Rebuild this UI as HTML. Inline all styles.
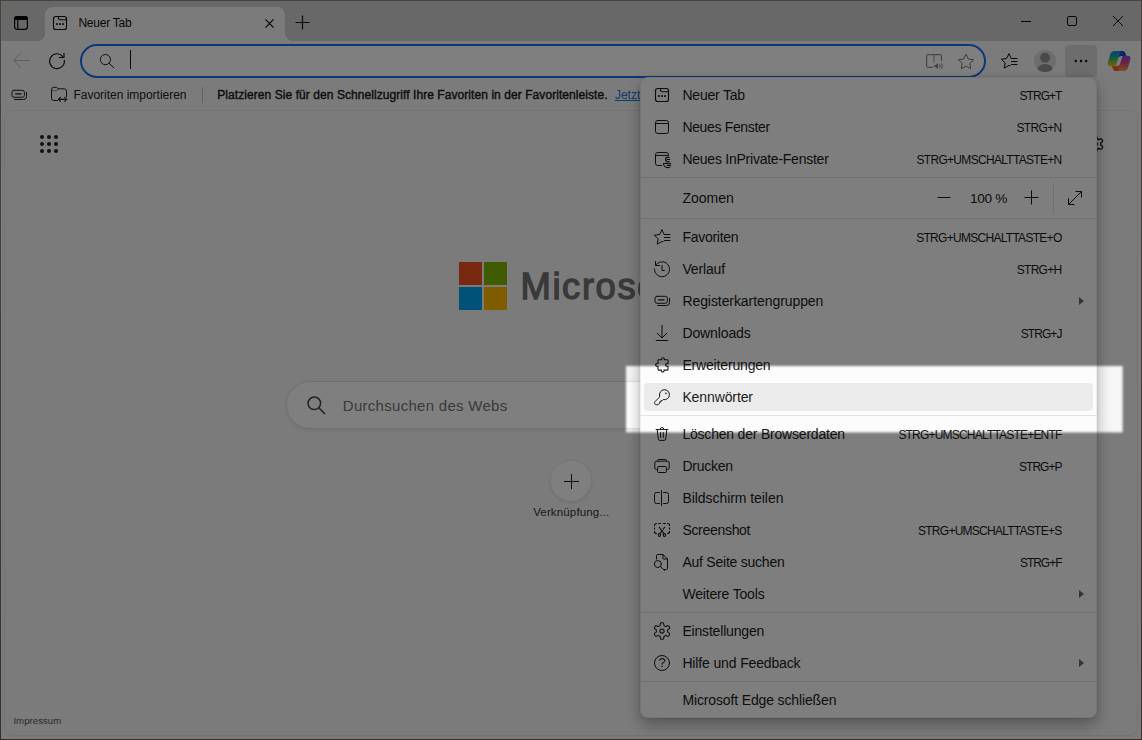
<!DOCTYPE html>
<html lang="de"><head><meta charset="utf-8"><title>Neuer Tab</title>
<style>
*{box-sizing:border-box;margin:0;padding:0}
html,body{width:1142px;height:740px;overflow:hidden;background:linear-gradient(#968478,#8c7868 60%,#735f4e)}
body{font-family:"Liberation Sans",sans-serif;color:#1b1b1b;position:relative}
#win{position:absolute;left:1px;top:1px;width:1140px;height:738px;background:#d0d0d0;overflow:hidden}
.abs{position:absolute}
svg{display:block}
/* tab strip */
#tab{position:absolute;left:44px;top:6px;width:240px;height:34px;background:#f7f7f7;border-radius:8px 8px 0 0}
#tab:before,#tab:after{content:"";position:absolute;bottom:0;width:8px;height:8px}
#tab:before{left:-8px;background:radial-gradient(circle at 0 0,rgba(247,247,247,0) 7.6px,#f7f7f7 8.4px)}
#tab:after{right:-8px;background:radial-gradient(circle at 100% 0,rgba(247,247,247,0) 7.6px,#f7f7f7 8.4px)}
#tabtitle{position:absolute;left:77.4px;top:15px;font-size:12px;line-height:14px;white-space:nowrap;color:#111}
/* toolbar */
#toolbar{position:absolute;left:0;top:40px;width:1140px;height:698px;background:#f7f7f7}
#addr{position:absolute;left:79px;top:43px;width:906px;height:34px;border:2px solid #1870f0;border-radius:17px;background:#fff}
#caret{position:absolute;left:129px;top:49px;width:1px;height:19px;background:#111}
#more{position:absolute;left:1064px;top:44px;width:32px;height:32px;border-radius:4px;background:#dadada}
.dot{position:absolute;width:2.400px;height:2.400px;border-radius:1.200px;background:#111;top:58.800px}
#favtxt{position:absolute;left:72.500px;top:87px;font-size:12px;line-height:14px;white-space:nowrap;color:#222}
#favsep{position:absolute;left:201px;top:86px;width:1px;height:16px;background:#c4c4c4}
#prompt{position:absolute;left:216.300px;top:87px;font-size:12px;line-height:14px;white-space:nowrap;color:#1b1b1b;-webkit-text-stroke:.4px #1b1b1b}
#jetzt{position:absolute;left:613.900px;top:87px;font-size:12px;line-height:14px;white-space:nowrap;color:#1478e0;text-decoration:underline}
/* content */
#content{position:absolute;left:3px;top:109px;width:1134px;height:626px;background:#f7f7f7;border:1px solid #e6e6e6;border-radius:8px;overflow:hidden}
.gd{position:absolute;width:4px;height:4px;border-radius:2px;background:#222}
.sq{position:absolute;width:23px;height:23px}
#ms{position:absolute;left:519.500px;top:262px;font-size:36.400px;line-height:48px;font-weight:normal;color:#737373;-webkit-text-stroke:1.300px #737373;white-space:nowrap;letter-spacing:1.600px}
#search{position:absolute;left:285px;top:380px;width:701px;height:48px;border-radius:24px;background:#fff;border:1px solid #e3e3e3;box-shadow:0 1px 4px rgba(0,0,0,.08)}
#sph{position:absolute;left:341.800px;top:395.600px;font-size:15px;line-height:18px;color:#747474;white-space:nowrap}
#plus{position:absolute;left:550px;top:460px;width:40px;height:40px;border-radius:20px;background:#fff;box-shadow:0 1px 4px rgba(0,0,0,.14)}
#verk{position:absolute;left:520.300px;width:100px;text-align:center;top:503.600px;font-size:11.500px;line-height:14px;color:#333;white-space:nowrap}
#impr{position:absolute;left:12.400px;top:713.800px;font-size:9.600px;line-height:12px;color:#555;white-space:nowrap}
/* menu */
#menu{position:absolute;left:639px;top:76px;width:457px;height:641px;background:#fcfcfc;border-radius:8px;box-shadow:0 0 0 1px rgba(0,0,0,.06) inset,0 7px 15px rgba(0,0,0,.30),0 0 4px rgba(0,0,0,.10);padding:2px 0 0 0;font-size:14px}
.item{position:relative;height:32px}
.zoomrow{position:relative;height:36px}
.sep{height:1px;margin:2px 0 2px 0;background:#e3e3e3}
.ic{position:absolute;left:12px;top:6px;width:20px;height:20px;color:#1b1b1b}
.lbl{position:absolute;left:42.400px;top:6.700px;line-height:18px;font-size:14px;white-space:nowrap;color:#1b1b1b}
.zoomrow .lbl{top:8.700px}
.sc{position:absolute;right:35.500px;top:8.500px;line-height:16px;font-size:12px;white-space:nowrap;color:#1b1b1b}
.arr{position:absolute;left:439px;top:12px;width:0;height:0;border-left:5px solid #6a6a6a;border-top:4px solid transparent;border-bottom:4px solid transparent}
.hov{position:absolute;left:4px;right:4px;top:2px;bottom:2px;border-radius:4px;background:#ebebeb}
.zoomrow svg{position:absolute;fill:none;stroke:#1b1b1b;stroke-width:1}
.zm{left:296px;top:9px;width:16px;height:16px}
.zp{left:383px;top:9px;width:16px;height:16px}
.zf{left:427px;top:10px;width:16px;height:16px}
.zpct{position:absolute;left:330px;top:9.500px;font-size:13.600px;line-height:18px;white-space:nowrap}
.zsep{position:absolute;left:413px;top:2px;width:1px;height:32px;background:#e3e3e3}
#overlay{position:absolute;left:0;top:0;width:1142px;height:740px;pointer-events:none}
#l1{letter-spacing:-0.205px}
#s1{letter-spacing:-0.945px}
#l2{letter-spacing:-0.341px}
#s2{letter-spacing:-0.669px}
#l3{letter-spacing:-0.241px}
#s3{letter-spacing:-0.696px}
#t_zoomen{letter-spacing:-0.010px}
#t_pct{letter-spacing:-0.329px}
#l4{letter-spacing:-0.262px}
#s4{letter-spacing:-0.715px}
#l5{letter-spacing:-0.156px}
#s5{letter-spacing:-0.703px}
#l6{letter-spacing:-0.072px}
#l7{letter-spacing:-0.107px}
#s7{letter-spacing:-0.941px}
#l8{letter-spacing:-0.168px}
#l9{letter-spacing:-0.109px}
#l10{letter-spacing:-0.201px}
#s10{letter-spacing:-0.803px}
#l11{letter-spacing:-0.234px}
#s11{letter-spacing:-0.977px}
#l12{letter-spacing:-0.055px}
#l13{letter-spacing:-0.303px}
#s13{letter-spacing:-0.738px}
#l14{letter-spacing:-0.235px}
#s14{letter-spacing:-1.012px}
#l15{letter-spacing:-0.170px}
#l16{letter-spacing:-0.182px}
#l17{letter-spacing:-0.141px}
#l18{letter-spacing:-0.137px}
#tabtitle{letter-spacing:-0.228px}
#favtxt{letter-spacing:-0.019px}
#prompt{letter-spacing:0.066px}
#sph{letter-spacing:0.286px}
#impr{letter-spacing:0.050px}
#verk{letter-spacing:0.152px}
</style></head>
<body>
<div id="win">
  <!-- tab strip -->
  <svg class="abs" style="left:12px;top:14px" width="16" height="16" viewBox="0 0 16 16" fill="none" stroke="#000" stroke-width="1.200"><rect x="1.600" y="1.600" width="12.800" height="12.800" rx="2.600"/><path d="M1.600 4.500h12.800V3.800a2.200 2.200 0 0 0-2.200-2.200H3.800a2.200 2.200 0 0 0-2.200 2.200z" fill="#000"/><path d="M4.800 4.500v10"/></svg>
  <div id="tab"></div>
  <span class="abs" style="left:49px;top:12px;color:#111"><svg viewBox="0 0 20 20" width="20" height="20" fill="none" stroke="currentColor" stroke-width="1" stroke-linecap="round" stroke-linejoin="round" ><rect x="3.500" y="3.500" width="13" height="13" rx="2.300" stroke-width="1.150"/><path d="M8.500 3.500v1.500a1.700 1.700 0 0 0 1.700 1.700h6.300" stroke-width="1.150"/><g fill="currentColor" stroke="none"><rect x="6.100" y="10.200" width="1.800" height="1.700"/><rect x="9.100" y="10.200" width="1.800" height="1.700"/><rect x="12.100" y="10.200" width="1.800" height="1.700"/></g></svg></span>
  <span id="tabtitle">Neuer Tab</span>
  <svg class="abs" style="left:263px;top:17px" width="11" height="11" viewBox="0 0 11 11" stroke="#111" stroke-width="1.200" fill="none"><path d="M1.500 1.300l8 8.400M9.500 1.300l-8 8.400"/></svg>
  <svg class="abs" style="left:293px;top:13px" width="17" height="17" viewBox="0 0 17 17" stroke="#111" stroke-width="1.200" fill="none"><path d="M1.500 8.500h14M8.500 1.500v14"/></svg>
  <svg class="abs" style="left:1019px;top:14px" width="12" height="12" viewBox="0 0 12 12" stroke="#111" stroke-width="1" fill="none"><path d="M1 6.500h10"/></svg>
  <svg class="abs" style="left:1065px;top:14px" width="12" height="12" viewBox="0 0 12 12" stroke="#111" stroke-width="1" fill="none"><rect x="1.500" y="1.500" width="9" height="9" rx="1.500"/></svg>
  <svg class="abs" style="left:1111px;top:14px" width="12" height="12" viewBox="0 0 12 12" stroke="#111" stroke-width="1" fill="none"><path d="M1 1l10 10M11 1L1 11"/></svg>

  <!-- toolbar -->
  <div id="toolbar"></div>
  <svg class="abs" style="left:10px;top:50px" width="20" height="20" viewBox="0 0 20 20" fill="none" stroke="#bcbcbc" stroke-width="1"><path d="M2.300 9.500h16M9.800 2.500L2.500 9.500l7.300 7"/></svg>
  <svg class="abs" style="left:46px;top:50px" width="20" height="20" viewBox="0 0 20 20" fill="none" stroke="#111" stroke-width="1.100" stroke-linecap="round" stroke-linejoin="round"><path d="M17.400 9.400A7.400 7.400 0 1 1 15.600 5.300"/><path d="M17 2.300V6.500H12.400"/></svg>
  <div id="addr"></div>
  <svg class="abs" style="left:96px;top:50px" width="20" height="20" viewBox="0 0 20 20" fill="none" stroke="#222" stroke-width="1"><circle cx="8.400" cy="8.600" r="5.100"/><path d="M12.200 12.400l4.600 4.400" stroke-linecap="round"/></svg>
  <div id="caret"></div>
  <!-- read aloud -->
  <svg class="abs" style="left:923px;top:50px" width="22" height="20" viewBox="0 0 22 20" fill="none" stroke="#767676" stroke-width="1"><path d="M8.800 16.300H3.700a1 1 0 0 1-1-1V4.700a1 1 0 0 1 1-1h12.700a1 1 0 0 1 1 1v5.100"/><path d="M9.900 3.700v8" stroke-opacity=".75"/><path d="M13.700 12.600l-1.900 1.800h-1.400v1.400h1.400l1.900 1.800z" fill="#767676" stroke-width=".5" stroke-linejoin="round"/><path d="M15.400 13.400a2.600 2.600 0 0 1 0 3.400M17.400 12.300a4.600 4.600 0 0 1 0 5.500" stroke-width=".9"/></svg>
  <!-- star -->
  <svg class="abs" style="left:955px;top:50px" width="20" height="20" viewBox="0 0 20 20" fill="none" stroke="#767676" stroke-width="1" stroke-linejoin="miter" stroke-miterlimit="2.500"><path d="M10 3.200l2.350 4.800l5.300.75l-3.850 3.700l.9 5.250L10 15.200l-4.700 2.500l.9-5.250L2.350 8.750l5.300-.75z"/></svg>
  <span class="abs" style="left:998px;top:50px;color:#111"><svg viewBox="0 0 20 20" width="20" height="20" fill="none" stroke="currentColor" stroke-width="1" stroke-linecap="round" stroke-linejoin="round" ><path d="M12.100 7.400L9.950 2.600L7.600 7.500L2.300 8.200L6.200 11.900L5.200 17.100L9.900 14.500L11.100 14.600" stroke-linejoin="miter" stroke-miterlimit="2"/><path d="M12.500 7.500h5.500M12.500 10.500h5.500M12.500 13.500h5.500"/></svg></span>
  <!-- profile -->
  <svg class="abs" style="left:1033px;top:49px" width="22" height="22" viewBox="0 0 22 22"><defs><clipPath id="pc"><circle cx="11" cy="11" r="11"/></clipPath></defs><circle cx="11" cy="11" r="11" fill="#dedbd8"/><g clip-path="url(#pc)" fill="#939393"><circle cx="11" cy="7.800" r="5"/><ellipse cx="11" cy="21" rx="8.200" ry="7"/></g></svg>
  <div id="more"></div>
  <svg class="abs" style="left:1064px;top:44px" width="32" height="32" viewBox="0 0 32 32" fill="#111"><circle cx="10.800" cy="16" r="1.200"/><circle cx="16" cy="16" r="1.200"/><circle cx="21.200" cy="16" r="1.200"/></svg>
  <!-- copilot -->
  <svg class="abs" style="left:1106px;top:49px" width="24" height="22" viewBox="0 0 24 22">
    <defs>
      <linearGradient id="cg1" x1="0" y1="0" x2="0" y2="1"><stop offset="0" stop-color="#0c8fd8"/><stop offset=".35" stop-color="#16a9b4"/><stop offset=".62" stop-color="#5fbf4a"/><stop offset="1" stop-color="#f4c400"/></linearGradient>
      <linearGradient id="cg2" x1="0" y1="0" x2="0" y2="1"><stop offset="0" stop-color="#f7a13a"/><stop offset=".5" stop-color="#dc4a86"/><stop offset="1" stop-color="#8d42e6"/></linearGradient>
      <linearGradient id="cg3" x1="0" y1="0" x2="1" y2="1"><stop offset="0" stop-color="#0b62d6"/><stop offset="1" stop-color="#0a3fb0"/></linearGradient>
      <linearGradient id="cg4" x1="0" y1="0" x2="1" y2="1"><stop offset="0" stop-color="#e8552a"/><stop offset="1" stop-color="#f07a30"/></linearGradient>
    </defs>
    <path id="cpA" d="M7.500 1H15c2 0 3 1.200 3.500 3l.5 2h-5c-1.700 0-2.500 1-3 2.500l-2 6.500c-.2.700-.6 1.200-1.400 1.200H3.300c-2 0-3-1.700-2.500-3.400L3.200 4.500C3.800 2.400 5.200 1 7.500 1z" fill="url(#cg1)"/>
    <path d="M13 1h2c2 0 3 1.200 3.500 3l.5 2h-5c-1 0-1.700.4-2.200 1z" fill="url(#cg3)"/>
    <g transform="rotate(180 12.100 11)">
      <path d="M7.500 1H15c2 0 3 1.200 3.500 3l.5 2h-5c-1.700 0-2.500 1-3 2.500l-2 6.500c-.2.700-.6 1.200-1.400 1.200H3.300c-2 0-3-1.700-2.500-3.400L3.200 4.500C3.800 2.400 5.200 1 7.500 1z" fill="url(#cg2)"/>
      <path d="M13 1h2c2 0 3 1.200 3.500 3l.5 2h-5c-1 0-1.700.4-2.200 1z" fill="url(#cg4)"/>
    </g>
  </svg>

  <!-- favorites bar -->
  <span class="abs" style="left:8px;top:84px;color:#222"><svg viewBox="0 0 20 20" width="20" height="20" fill="none" stroke="currentColor" stroke-width="1" stroke-linecap="round" stroke-linejoin="round" ><rect x="3" y="5.300" width="12.400" height="7" rx="2"/><path d="M17.500 7.300v4.200a3 3 0 0 1-3 3H5.500"/><path d="M6.500 8.800h5.600" stroke-width="1.300"/></svg></span>
  <svg class="abs" style="left:48px;top:84px" width="20" height="20" viewBox="0 0 20 20" fill="none" stroke="#222" stroke-width="1" stroke-linecap="round" stroke-linejoin="round"><path d="M8.400 15.500H4.700a2.200 2.200 0 0 1-2.200-2.200V4.600a2.200 2.200 0 0 1 2.200-2.200h2.200c.6 0 1 .2 1.400.6l.9.800h6.100a2.200 2.200 0 0 1 2.200 2.200V11.800"/><path d="M2.500 5.700h4.400c.6 0 1-.2 1.400-.6l1-1.200" stroke-opacity=".55"/><path d="M9.500 14.400h8.200M11.400 12.400L9.400 14.400l2 2M15.700 12.400l2 2l-2 2" stroke-width="1.100"/></svg>
  <span id="favtxt">Favoriten importieren</span>
  <div id="favsep"></div>
  <span id="prompt">Platzieren Sie für den Schnellzugriff Ihre Favoriten in der Favoritenleiste.</span>
  <span id="jetzt">Jetzt Favoriten importieren</span>

  <!-- content -->
  <div id="content"></div>
  <div class="gd" style="left:38.7px;top:134.0px"></div><div class="gd" style="left:38.7px;top:141.1px"></div><div class="gd" style="left:38.7px;top:148.2px"></div><div class="gd" style="left:45.8px;top:134.0px"></div><div class="gd" style="left:45.8px;top:141.1px"></div><div class="gd" style="left:45.8px;top:148.2px"></div><div class="gd" style="left:52.9px;top:134.0px"></div><div class="gd" style="left:52.9px;top:141.1px"></div><div class="gd" style="left:52.9px;top:148.2px"></div>
  <div class="sq" style="left:458px;top:261px;background:#f25022"></div>
  <div class="sq" style="left:483px;top:261px;background:#7fba00"></div>
  <div class="sq" style="left:458px;top:286px;background:#00a4ef"></div>
  <div class="sq" style="left:483px;top:286px;background:#ffb900"></div>
  <span id="ms">Microsoft</span>
  <div id="search"></div>
  <svg class="abs" style="left:304px;top:392.500px" width="22" height="22" viewBox="0 0 22 22" fill="none" stroke="#444" stroke-width="1.500" stroke-linecap="round"><circle cx="9.300" cy="9.300" r="6.300"/><path d="M14 14l5.500 5.500"/></svg>
  <span id="sph">Durchsuchen des Webs</span>
  <div id="plus"></div>
  <svg class="abs" style="left:562px;top:472px" width="17" height="17" viewBox="0 0 17 17" stroke="#1b1b1b" stroke-width="1" fill="none"><path d="M1 8.500h15M8.500 1v15"/></svg>
  <span id="verk">Verknüpfung...</span>
  <span id="impr">Impressum</span>
  <span class="abs" style="left:1084px;top:133px;color:#111"><svg viewBox="0 0 20 20" width="20" height="20" fill="none" stroke="currentColor" stroke-width="1.300"><path d="M15.60 10.00 L15.60 10.24 L15.60 10.49 L15.64 10.74 L15.75 11.01 L16.09 11.35 L16.71 11.80 L17.31 12.30 L17.57 12.76 L17.59 13.14 L17.50 13.50 L17.36 13.83 L17.19 14.15 L17.00 14.46 L16.78 14.75 L16.52 15.00 L16.17 15.18 L15.65 15.18 L14.91 14.91 L14.21 14.60 L13.76 14.48 L13.46 14.51 L13.23 14.61 L13.01 14.73 L12.80 14.85 L12.59 14.97 L12.38 15.10 L12.18 15.25 L12.00 15.49 L11.88 15.95 L11.80 16.71 L11.66 17.48 L11.40 17.94 L11.07 18.15 L10.72 18.24 L10.36 18.29 L10.00 18.30 L9.64 18.29 L9.28 18.24 L8.93 18.15 L8.60 17.94 L8.34 17.48 L8.20 16.71 L8.12 15.95 L8.00 15.49 L7.82 15.25 L7.62 15.10 L7.41 14.97 L7.20 14.85 L6.99 14.73 L6.77 14.61 L6.54 14.51 L6.24 14.48 L5.79 14.60 L5.09 14.91 L4.35 15.18 L3.83 15.18 L3.48 15.00 L3.22 14.75 L3.00 14.46 L2.81 14.15 L2.64 13.83 L2.50 13.50 L2.41 13.14 L2.43 12.76 L2.69 12.30 L3.29 11.80 L3.91 11.35 L4.25 11.01 L4.36 10.74 L4.40 10.49 L4.40 10.24 L4.40 10.00 L4.40 9.76 L4.40 9.51 L4.36 9.26 L4.25 8.99 L3.91 8.65 L3.29 8.20 L2.69 7.70 L2.43 7.24 L2.41 6.86 L2.50 6.50 L2.64 6.17 L2.81 5.85 L3.00 5.54 L3.22 5.25 L3.48 5.00 L3.83 4.82 L4.35 4.82 L5.09 5.09 L5.79 5.40 L6.24 5.52 L6.54 5.49 L6.77 5.39 L6.99 5.27 L7.20 5.15 L7.41 5.03 L7.62 4.90 L7.82 4.75 L8.00 4.51 L8.12 4.05 L8.20 3.29 L8.34 2.52 L8.60 2.06 L8.93 1.85 L9.28 1.76 L9.64 1.71 L10.00 1.70 L10.36 1.71 L10.72 1.76 L11.07 1.85 L11.40 2.06 L11.66 2.52 L11.80 3.29 L11.88 4.05 L12.00 4.51 L12.18 4.75 L12.38 4.90 L12.59 5.03 L12.80 5.15 L13.01 5.27 L13.23 5.39 L13.46 5.49 L13.76 5.52 L14.21 5.40 L14.91 5.09 L15.65 4.82 L16.17 4.82 L16.52 5.00 L16.78 5.25 L17.00 5.54 L17.19 5.85 L17.36 6.17 L17.50 6.50 L17.59 6.86 L17.57 7.24 L17.31 7.70 L16.71 8.20 L16.09 8.65 L15.75 8.99 L15.64 9.26 L15.60 9.51 L15.60 9.76Z"/><circle cx="10" cy="10" r="2.200"/></svg></span>

  <!-- menu -->
  <div id="menu">
<div class="item"><span class="ic"><svg viewBox="0 0 20 20" width="20" height="20" fill="none" stroke="currentColor" stroke-width="1" stroke-linecap="round" stroke-linejoin="round" ><rect x="3.500" y="3.500" width="13" height="13" rx="2.300" stroke-width="1.150"/><path d="M8.500 3.500v1.500a1.700 1.700 0 0 0 1.700 1.700h6.300" stroke-width="1.150"/><g fill="currentColor" stroke="none"><rect x="6.100" y="10.200" width="1.800" height="1.700"/><rect x="9.100" y="10.200" width="1.800" height="1.700"/><rect x="12.100" y="10.200" width="1.800" height="1.700"/></g></svg></span><span class="lbl" id="l1">Neuer Tab</span><span class="sc" id="s1">STRG+T</span></div>
<div class="item"><span class="ic"><svg viewBox="0 0 20 20" width="20" height="20" fill="none" stroke="currentColor" stroke-width="1" stroke-linecap="round" stroke-linejoin="round" ><rect x="3.5" y="3.5" width="13" height="13" rx="2.2"/><path d="M3.5 6.5h13"/></svg></span><span class="lbl" id="l2">Neues Fenster</span><span class="sc" id="s2">STRG+N</span></div>
<div class="item"><span class="ic"><svg viewBox="0 0 20 20" width="20" height="20" fill="none" stroke="currentColor" stroke-width="1" stroke-linecap="round" stroke-linejoin="round" ><path d="M9.600 16.500H5.700a2.200 2.200 0 0 1-2.200-2.200V5.700a2.200 2.200 0 0 1 2.200-2.200h8.600a2.200 2.200 0 0 1 2.200 2.200V6.400H3.500"/><path d="M17.300 8.400c-.4-.2-.8-.3-1.300-.3a2.400 2.400 0 0 0 0 4.800c.5 0 .9-.1 1.300-.3M15.300 10.500h2.500" stroke-width="1.150"/><path d="M11.500 14.500h7.200M11.500 14.500c0 2.400 1.900 4.100 4.300 4.100c.7 0 1.300-.1 1.900-.4M15.300 16.400h3.400" stroke-width="1.150"/></svg></span><span class="lbl" id="l3">Neues InPrivate-Fenster</span><span class="sc" id="s3">STRG+UMSCHALTTASTE+N</span></div>
<div class="sep"></div>
<div class="zoomrow"><span class="lbl" id="t_zoomen">Zoomen</span><svg class="zm" viewBox="0 0 16 16"><path d="M1.5 8.5h13" /></svg><span class="zpct" id="t_pct">100 %</span><svg class="zp" viewBox="0 0 16 16"><path d="M1.5 8.5h14M8.5 1.5v14"/></svg><span class="zsep"></span><svg class="zf" viewBox="0 0 16 16"><path d="M1.5 14.5L14.5 1.5M8.5 1.5h6v6M1.5 8.500v6h6"/></svg></div>
<div class="sep"></div>
<div class="item"><span class="ic"><svg viewBox="0 0 20 20" width="20" height="20" fill="none" stroke="currentColor" stroke-width="1" stroke-linecap="round" stroke-linejoin="round" ><path d="M12.100 7.400L9.950 2.600L7.600 7.500L2.300 8.200L6.200 11.900L5.200 17.100L9.900 14.500L11.100 14.600" stroke-linejoin="miter" stroke-miterlimit="2"/><path d="M12.500 7.500h5.500M12.500 10.500h5.500M12.500 13.500h5.500"/></svg></span><span class="lbl" id="l4">Favoriten</span><span class="sc" id="s4">STRG+UMSCHALTTASTE+O</span></div>
<div class="item"><span class="ic"><svg viewBox="0 0 20 20" width="20" height="20" fill="none" stroke="currentColor" stroke-width="1" stroke-linecap="round" stroke-linejoin="round" ><path d="M3.500 6.500A7.500 7.500 0 1 1 2.500 10"/><path d="M3.500 2.500v4h4"/><path d="M10 6.500v5h2.500"/></svg></span><span class="lbl" id="l5">Verlauf</span><span class="sc" id="s5">STRG+H</span></div>
<div class="item"><span class="ic"><svg viewBox="0 0 20 20" width="20" height="20" fill="none" stroke="currentColor" stroke-width="1" stroke-linecap="round" stroke-linejoin="round" ><rect x="3" y="5.300" width="12.400" height="7" rx="2"/><path d="M17.500 7.300v4.200a3 3 0 0 1-3 3H5.500"/><path d="M6.500 8.800h5.600" stroke-width="1.300"/></svg></span><span class="lbl" id="l6">Registerkartengruppen</span><span class="arr"></span></div>
<div class="item"><span class="ic"><svg viewBox="0 0 20 20" width="20" height="20" fill="none" stroke="currentColor" stroke-width="1" stroke-linecap="round" stroke-linejoin="round" ><path d="M10 2.500v12M5.200 10.200L10 15l4.800-4.800M4.200 17.500h11.600"/></svg></span><span class="lbl" id="l7">Downloads</span><span class="sc" id="s7">STRG+J</span></div>
<div class="item"><span class="ic"><svg viewBox="0 0 20 20" width="20" height="20" fill="none" stroke="currentColor" stroke-width="1" stroke-linecap="round" stroke-linejoin="round" ><path d="M6.600 4.700H9.650V4.100a1.350 1.350 0 0 1 2.700 0V4.700H15.400a.6 .6 0 0 1 .6 .6V8.500H14.900a1.350 1.350 0 0 0 0 2.700H16V14.500a.6 .6 0 0 1-.6 .6H12.050V15.700a1.350 1.350 0 0 1-2.700 0V15.100H6.600a.6 .6 0 0 1-.6-.6V11.200H5a1.350 1.350 0 0 1 0-2.700H6V5.300a.6 .6 0 0 1 .6-.6z" stroke-width="1.100" stroke-linejoin="miter"/></svg></span><span class="lbl" id="l8">Erweiterungen</span></div>
<div class="item hl"><div class="hov"></div><span class="ic"><svg viewBox="0 0 20 20" width="20" height="20" fill="none" stroke="currentColor" stroke-width="1" stroke-linecap="round" stroke-linejoin="round" ><path d="M7.530 8.800A5 5 0 1 1 11.200 12.550L10.200 13.600H9V14.800H7.800V16L6.700 17.200C5.800 18 4.200 18 3.200 17.300C2.400 16.700 2.300 15.400 3 14.600L7.300 10.300C7.500 9.800 7.500 9.300 7.530 8.800z"/><circle cx="13.900" cy="6.400" r=".8" fill="currentColor" stroke="none"/></svg></span><span class="lbl" id="l9">Kennwörter</span></div>
<div class="sep"></div>
<div class="item"><span class="ic"><svg viewBox="0 0 20 20" width="20" height="20" fill="none" stroke="currentColor" stroke-width="1" stroke-linecap="round" stroke-linejoin="round" ><path d="M4.100 5.500h11.800M8.200 5.300a1.800 1.800 0 0 1 3.600 0M5.200 5.500l1.100 9.600a1.500 1.500 0 0 0 1.500 1.300h4.400a1.500 1.500 0 0 0 1.500-1.300l1.100-9.600M8.600 8.500v5M11.300 8.500v5"/></svg></span><span class="lbl" id="l10">Löschen der Browserdaten</span><span class="sc" id="s10">STRG+UMSCHALTTASTE+ENTF</span></div>
<div class="item"><span class="ic"><svg viewBox="0 0 20 20" width="20" height="20" fill="none" stroke="currentColor" stroke-width="1" stroke-linecap="round" stroke-linejoin="round" ><path d="M5.600 5.200V4.500a1 1 0 0 1 1-1h6.800a1 1 0 0 1 1 1v.7M5.600 13.500H4.500a1.700 1.700 0 0 1-1.700-1.700V6.900a1.700 1.700 0 0 1 1.700-1.700h11a1.700 1.700 0 0 1 1.700 1.700v4.900a1.700 1.700 0 0 1-1.700 1.700h-1.100"/><rect x="5.600" y="10.500" width="8.800" height="6" rx="1"/></svg></span><span class="lbl" id="l11">Drucken</span><span class="sc" id="s11">STRG+P</span></div>
<div class="item"><span class="ic"><svg viewBox="0 0 20 20" width="20" height="20" fill="none" stroke="currentColor" stroke-width="1" stroke-linecap="round" stroke-linejoin="round" ><path d="M9.500 2.500v15M7.500 4.500H4.500a2 2 0 0 0-2 2v7a2 2 0 0 0 2 2h3M11.500 4.500h3a2 2 0 0 1 2 2v7a2 2 0 0 1-2 2h-3"/></svg></span><span class="lbl" id="l12">Bildschirm teilen</span></div>
<div class="item"><span class="ic"><svg viewBox="0 0 20 20" width="20" height="20" fill="none" stroke="currentColor" stroke-width="1" stroke-linecap="round" stroke-linejoin="round" ><path d="M2.500 5.900V5.500a2 2 0 0 1 2-2h.4M6.200 3.500h2.800M11 3.500h2.800M15.100 3.500h.4a2 2 0 0 1 2 2v.4M2.500 7.600v2M17.500 7.600v2M2.500 11.100v.4a2 2 0 0 0 2 2h.4M17.500 11.100v.4a2 2 0 0 1-2 2h-.4" stroke-width="1.100" stroke-linecap="butt"/><path d="M7.300 7.300l4.600 6.300M12.600 7.300l-1.400 2M10.300 10.500l-2.400 3.100" stroke-width="1.100"/><ellipse cx="7.400" cy="15.100" rx="1.150" ry="1.450" stroke-width="1.100"/><ellipse cx="12.400" cy="15.100" rx="1.150" ry="1.450" stroke-width="1.100"/></svg></span><span class="lbl" id="l13">Screenshot</span><span class="sc" id="s13">STRG+UMSCHALTTASTE+S</span></div>
<div class="item"><span class="ic"><svg viewBox="0 0 20 20" width="20" height="20" fill="none" stroke="currentColor" stroke-width="1" stroke-linecap="round" stroke-linejoin="round" ><path d="M4.500 7V3.500a1 1 0 0 1 1-1H11L15.500 7v9.500a1 1 0 0 1-1 1h-2M11 2.500V6.600a.4 .4 0 0 0 .4 .4h4.100"/><circle cx="5.900" cy="12" r="3.500"/><path d="M8.400 14.500l4.200 4"/></svg></span><span class="lbl" id="l14">Auf Seite suchen</span><span class="sc" id="s14">STRG+F</span></div>
<div class="item"><span class="lbl" id="l15">Weitere Tools</span><span class="arr"></span></div>
<div class="sep"></div>
<div class="item"><span class="ic"><svg viewBox="0 0 20 20" width="20" height="20" fill="none" stroke="currentColor" stroke-width="1" stroke-linecap="round" stroke-linejoin="round" ><path d="M15.60 10.00 L15.60 10.24 L15.60 10.49 L15.64 10.74 L15.75 11.01 L16.09 11.35 L16.71 11.80 L17.31 12.30 L17.57 12.76 L17.59 13.14 L17.50 13.50 L17.36 13.83 L17.19 14.15 L17.00 14.46 L16.78 14.75 L16.52 15.00 L16.17 15.18 L15.65 15.18 L14.91 14.91 L14.21 14.60 L13.76 14.48 L13.46 14.51 L13.23 14.61 L13.01 14.73 L12.80 14.85 L12.59 14.97 L12.38 15.10 L12.18 15.25 L12.00 15.49 L11.88 15.95 L11.80 16.71 L11.66 17.48 L11.40 17.94 L11.07 18.15 L10.72 18.24 L10.36 18.29 L10.00 18.30 L9.64 18.29 L9.28 18.24 L8.93 18.15 L8.60 17.94 L8.34 17.48 L8.20 16.71 L8.12 15.95 L8.00 15.49 L7.82 15.25 L7.62 15.10 L7.41 14.97 L7.20 14.85 L6.99 14.73 L6.77 14.61 L6.54 14.51 L6.24 14.48 L5.79 14.60 L5.09 14.91 L4.35 15.18 L3.83 15.18 L3.48 15.00 L3.22 14.75 L3.00 14.46 L2.81 14.15 L2.64 13.83 L2.50 13.50 L2.41 13.14 L2.43 12.76 L2.69 12.30 L3.29 11.80 L3.91 11.35 L4.25 11.01 L4.36 10.74 L4.40 10.49 L4.40 10.24 L4.40 10.00 L4.40 9.76 L4.40 9.51 L4.36 9.26 L4.25 8.99 L3.91 8.65 L3.29 8.20 L2.69 7.70 L2.43 7.24 L2.41 6.86 L2.50 6.50 L2.64 6.17 L2.81 5.85 L3.00 5.54 L3.22 5.25 L3.48 5.00 L3.83 4.82 L4.35 4.82 L5.09 5.09 L5.79 5.40 L6.24 5.52 L6.54 5.49 L6.77 5.39 L6.99 5.27 L7.20 5.15 L7.41 5.03 L7.62 4.90 L7.82 4.75 L8.00 4.51 L8.12 4.05 L8.20 3.29 L8.34 2.52 L8.60 2.06 L8.93 1.85 L9.28 1.76 L9.64 1.71 L10.00 1.70 L10.36 1.71 L10.72 1.76 L11.07 1.85 L11.40 2.06 L11.66 2.52 L11.80 3.29 L11.88 4.05 L12.00 4.51 L12.18 4.75 L12.38 4.90 L12.59 5.03 L12.80 5.15 L13.01 5.27 L13.23 5.39 L13.46 5.49 L13.76 5.52 L14.21 5.40 L14.91 5.09 L15.65 4.82 L16.17 4.82 L16.52 5.00 L16.78 5.25 L17.00 5.54 L17.19 5.85 L17.36 6.17 L17.50 6.50 L17.59 6.86 L17.57 7.24 L17.31 7.70 L16.71 8.20 L16.09 8.65 L15.75 8.99 L15.64 9.26 L15.60 9.51 L15.60 9.76Z" stroke-width="1.050"/><circle cx="10" cy="10" r="2.100" stroke-width="1.050"/></svg></span><span class="lbl" id="l16">Einstellungen</span></div>
<div class="item"><span class="ic"><svg viewBox="0 0 20 20" width="20" height="20" fill="none" stroke="currentColor" stroke-width="1" stroke-linecap="round" stroke-linejoin="round" ><circle cx="10" cy="10" r="7.500"/><text x="10" y="14.400" text-anchor="middle" font-family="Liberation Sans, sans-serif" font-size="12.800" fill="currentColor" stroke="none">?</text></svg></span><span class="lbl" id="l17">Hilfe und Feedback</span><span class="arr"></span></div>
<div class="sep"></div>
<div class="item"><span class="lbl" id="l18">Microsoft Edge schließen</span></div>
  </div>
</div>
<svg id="overlay" viewBox="0 0 1142 740" width="1142" height="740">
  <defs>
    <filter id="bl" x="-5%" y="-20%" width="110%" height="140%"><feGaussianBlur stdDeviation="1.300"/></filter>
    <mask id="hole" maskUnits="userSpaceOnUse" x="0" y="0" width="1142" height="740">
      <rect x="0" y="0" width="1142" height="740" fill="#fff"/>
      <rect x="626" y="366" width="496.600" height="66.400" fill="#000" filter="url(#bl)"/>
    </mask>
  </defs>
  <rect x="0" y="0" width="1142" height="740" fill="#000" fill-opacity=".5" mask="url(#hole)"/>
</svg>
</body></html>
